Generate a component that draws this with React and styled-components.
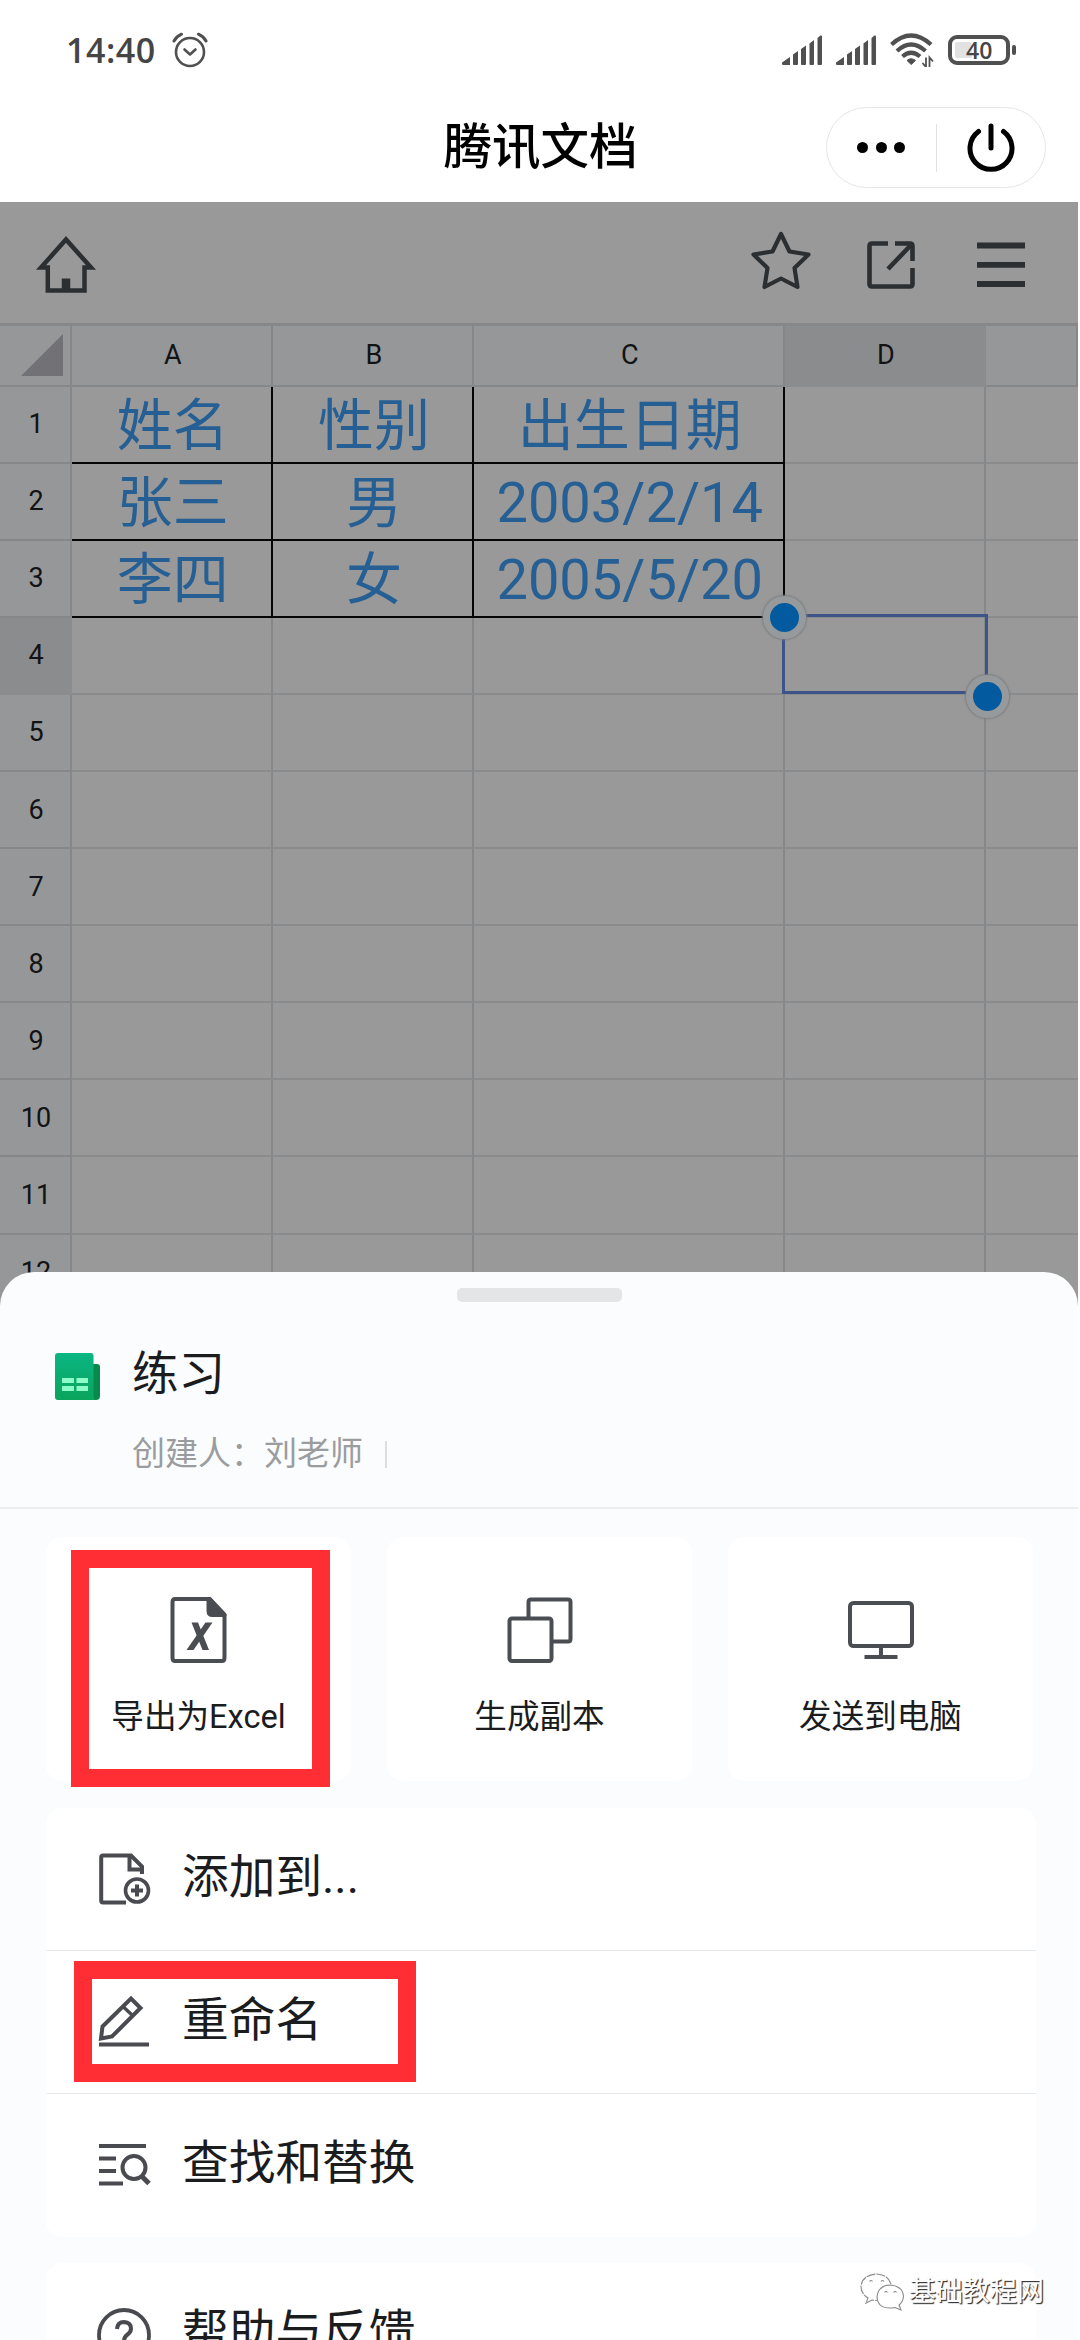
import React from 'react';
import styled, { createGlobalStyle } from 'styled-components';

const columns = ['A', 'B', 'C', 'D', ''];

const records = [
    ['姓名', '性别', '出生日期'],
    ['张三', '男', '2003/2/14'],
    ['李四', '女', '2005/5/20'],
];

const rowNumbers = [1, 2, 3, 4, 5, 6, 7, 8, 9, 10, 11, 12];

const App = () => {
    return (
        <Page>
            <GlobalStyle />
            <StatusBar />
            <NavBar />
            <Dimmed>
                <Toolbar />
                <SheetGrid />
            </Dimmed>
            <ActionSheet />
            <Watermark>
                <WechatIcon />
                <span>基础教程网</span>
            </Watermark>
        </Page>
    )
}

const StatusBar = () => (
    <Status>
        <StatusGroup>
            <Clock>14:40</Clock>
            <AlarmIcon />
        </StatusGroup>
        <StatusGroup>
            <SignalIcon />
            <SignalIcon />
            <WifiIcon />
            <Battery>
                <BatteryBody>
                    <BatteryLevel />
                    <BatteryText>40</BatteryText>
                </BatteryBody>
                <BatteryTip />
            </Battery>
        </StatusGroup>
    </Status>
)

const NavBar = () => (
    <Nav>
        <NavTitle>腾讯文档</NavTitle>
        <Capsule>
            <CapsuleButton>
                <Dot />
                <Dot />
                <Dot />
            </CapsuleButton>
            <CapsuleLine />
            <CapsuleButton>
                <PowerIcon />
            </CapsuleButton>
        </Capsule>
    </Nav>
)

const Toolbar = () => (
    <Tools>
        <HomeIcon />
        <ToolGroup>
            <StarIcon />
            <ShareIcon />
            <MenuIcon />
        </ToolGroup>
    </Tools>
)

const SheetGrid = () => (
    <Grid>
        <Corner>
            <svg width="42" height="42" viewBox="0 0 42 42">
                <path d="M42 0V42H0Z" fill="#727276" />
            </svg>
        </Corner>
        {columns.map((name) => (
            <ColumnHead key={name} $active={name === 'D'}>{name}</ColumnHead>
        ))}
        {rowNumbers.map((number, row) => (
            <React.Fragment key={number}>
                <RowHead $active={number === 4}>{number}</RowHead>
                {columns.map((name, col) => (
                    <Cell key={name} $bordered={row < 3 && col < 3}>
                        {records[row] && records[row][col]}
                        {name === 'D' && number === 4 && (
                            <Selection>
                                <Handle $start />
                                <Handle />
                            </Selection>
                        )}
                    </Cell>
                ))}
            </React.Fragment>
        ))}
    </Grid>
)

const ActionSheet = () => (
    <Panel>
        <Grabber />
        <FileInfo>
            <FileIcon />
            <FileText>
                <FileName>练习</FileName>
                <Creator>
                    创建人：刘老师
                    <CreatorLine />
                </Creator>
            </FileText>
        </FileInfo>
        <Tiles>
            <Tile>
                <ExcelIcon />
                导出为Excel
                <TileMark />
            </Tile>
            <Tile>
                <CopyIcon />
                生成副本
            </Tile>
            <Tile>
                <MonitorIcon />
                发送到电脑
            </Tile>
        </Tiles>
        <Card>
            <Row>
                <AddFileIcon />
                添加到...
            </Row>
            <Row>
                <PencilIcon />
                重命名
                <RowMark />
            </Row>
            <Row>
                <FindIcon />
                查找和替换
            </Row>
        </Card>
        <Card>
            <Row>
                <HelpIcon />
                帮助与反馈
            </Row>
        </Card>
    </Panel>
)

/* status bar icons */

const AlarmIcon = () => (
    <svg width="36" height="36" viewBox="0 0 36 36" fill="none" stroke="#505050" strokeWidth="2.6" strokeLinecap="round" strokeLinejoin="round">
        <circle cx="18" cy="20" r="14" />
        <path d="M12.500 17.500L18 22.500L23.500 17.500" />
        <path d="M2 9Q4.500 4.500 9.500 2.200M34 9Q31.500 4.500 26.500 2.200" strokeWidth="3" />
    </svg>
)

const SignalIcon = () => (
    <svg width="40" height="30" viewBox="0 0 40 30" fill="#505050">
        <path d="M0 27.500L8 22V30H1Q0 30 0 28.500Z" />
        <path d="M11 19.500L16 16V29Q16 30 15 30H12Q11 30 11 29Z" />
        <path d="M19 14L24 10.500V29Q24 30 23 30H20Q19 30 19 29Z" />
        <path d="M27.500 8.500L32 5V29Q32 30 31 30H28.500Q27.500 30 27.500 29Z" />
        <path d="M35.500 3L38.500 0.500Q40 0 40 1.500V29Q40 30 39 30H36.500Q35.500 30 35.500 29Z" />
    </svg>
)

const WifiIcon = () => (
    <svg width="44" height="34" viewBox="0 0 44 34" fill="none" stroke="#505050">
        <path d="M1.500 11.500Q21 -6.500 41 11.500" strokeWidth="4.200" />
        <path d="M7 18Q21 5 35.500 18" strokeWidth="4.200" />
        <path d="M12.500 23.500Q21 16 30 23.500" strokeWidth="4.200" />
        <path d="M17 27.500Q21 24 25.500 27.500L21.200 31.500Z" fill="#505050" strokeWidth="1" />
        <path d="M36 24.500V34L32.500 30M39.500 34V24.500L43 28.500" strokeWidth="1.800" />
    </svg>
)

const PowerIcon = () => (
    <svg width="48" height="50" viewBox="0 0 48 50" fill="none" stroke="#000" strokeWidth="5" strokeLinecap="round">
        <path d="M24 3V25" />
        <path d="M11.500 8.500A21 21 0 1 0 36.500 8.500" />
    </svg>
)

/* toolbar icons */

const HomeIcon = () => (
    <svg width="60" height="58" viewBox="0 0 60 58" overflow="visible" fill="none" stroke="#2b2f32" strokeWidth="4.500">
        <path d="M11.800 54.500V31.500H5L30 3.500L55 31.500H48.500V54.500Z" />
        <path d="M30 42.500V54" strokeWidth="8.500" />
    </svg>
)

const StarIcon = () => (
    <svg width="60" height="60" viewBox="0 0 60 60" fill="none" stroke="#2b2f32" strokeWidth="4.200" strokeLinejoin="round">
        <path d="M30 4L38.500 21.500L57.500 24.500L43.500 38L46.500 57L30 48.500L13.500 57L16.500 38L2.500 24.500L21.500 21.500Z" />
    </svg>
)

const ShareIcon = () => (
    <svg width="48" height="48" viewBox="0 0 48 48" fill="none" stroke="#2b2f32" strokeWidth="4.600" strokeLinejoin="round">
        <path d="M21 2.500H5Q2.500 2.500 2.500 5V43Q2.500 45.500 5 45.500H43Q45.500 45.500 45.500 43V27" />
        <path d="M28 2.500H43Q45.500 2.500 45.500 5V20" />
        <path d="M44 4L21 28" />
    </svg>
)

const MenuIcon = () => (
    <svg width="48" height="46" viewBox="0 0 48 46" stroke="#2b2f32" strokeWidth="5.800">
        <path d="M0 3.500H48M0 22.800H48M0 42H48" />
    </svg>
)

/* action sheet icons */

const FileIcon = () => (
    <svg width="45" height="47" viewBox="0 0 45 47">
        <defs>
            <linearGradient id="file" x1="0" y1="0" x2="0" y2="1">
                <stop offset="0" stopColor="#0ab683" />
                <stop offset="1" stopColor="#0aa45c" />
            </linearGradient>
        </defs>
        <path d="M30 11H42Q45 11 45 14V43Q45 47 41 47H30Z" fill="#088a4c" />
        <path d="M3 0H36Q38.500 0 38.500 3V43Q38.500 46 41 47H3Q0 47 0 44V3Q0 0 3 0Z" fill="url(#file)" />
        <path d="M7 25H19V30H7ZM21.500 25H33V30H21.500ZM7 33H19V38H7ZM21.500 33H33V38H21.500Z" fill="#8dfcc8" />
    </svg>
)

const ExcelIcon = () => (
    <TileSvg viewBox="0 0 66 66">
        <path d="M44 2H9Q6.500 2 6.500 5.500V60.500Q6.500 64 9 64H56Q58.500 64 58.500 60.500V17.500Z" />
        <path d="M42.500 2V14Q42.500 18 46.500 18H58.500Z" fill="#4a4d52" />
        <path d="M25.500 25.500H32L43 53H36.500Z" fill="#4a4d52" stroke="none" />
        <path d="M39.500 25.500H46.500L27.500 53H20.500Z" fill="#4a4d52" stroke="none" />
    </TileSvg>
)

const CopyIcon = () => (
    <TileSvg viewBox="0 0 66 66">
        <path d="M21.500 21V5Q21.500 2.500 24 2.500H61Q63.500 2.500 63.500 5V42Q63.500 44.500 61 44.500H45" />
        <rect x="2.500" y="21.500" width="42" height="42.500" rx="2.500" />
    </TileSvg>
)

const MonitorIcon = () => (
    <TileSvg viewBox="0 0 66 66">
        <rect x="2" y="6" width="62" height="43" rx="3.500" />
        <path d="M33 49V60M16.500 60H49.500" />
    </TileSvg>
)

const AddFileIcon = () => (
    <RowSvg viewBox="0 0 52 52">
        <path d="M27 49.500H4Q2.200 49.500 2.200 47.500V4.500Q2.200 2.500 4 2.500H32L43 13.500V21" />
        <path d="M30.500 3V16.500H44" />
        <circle cx="38" cy="37.500" r="11.500" strokeWidth="3.600" />
        <path d="M38 31.500V43.500M32 37.500H44" />
    </RowSvg>
)

const PencilIcon = () => (
    <RowSvg viewBox="0 0 52 52">
        <path d="M2 42.500L3.500 30.500L32 2.500L41.500 12L13 40.500Z" />
        <path d="M24.500 11L33 19" strokeWidth="3.400" />
        <path d="M0 48.500H50" />
    </RowSvg>
)

const FindIcon = () => (
    <RowSvg viewBox="0 0 52 52">
        <path d="M0 7H47M0 19.500H17M0 32H17M0 44.500H24" />
        <circle cx="35" cy="28.500" r="11.500" />
        <path d="M42.500 37L50 44.500" strokeWidth="5" />
    </RowSvg>
)

const HelpIcon = () => (
    <RowSvg viewBox="0 0 52 52">
        <circle cx="25" cy="27" r="25" strokeWidth="3.800" />
        <path d="M18 21Q18.500 14 25 14Q32 14.500 32 20.500Q32 24 28.500 26.500Q25 29 25 33" />
    </RowSvg>
)

const WechatIcon = () => (
    <svg width="45" height="38" viewBox="0 0 45 38" fill="none" stroke="#8a8a8a" strokeWidth="1.100">
        <path d="M31 11Q28 1.500 16.500 1Q2 2 1 13.500Q1 21 8 25L6 30L12 27L17 27.500" strokeDasharray="9 1" />
        <path d="M30 12Q43 13 43.500 23.500Q43 29 39 32L41 37L35 34.500Q18 37.500 17 24Q18 12.500 30 12Z" fill="#fff" />
        <path d="M9.500 8.500Q11 6.500 12.500 8.500M21 8.500Q22.500 6.500 24 8.500M24.500 19.500Q26 17.500 27.500 19.500M33.500 19.500Q35 17.500 36.500 19.500" />
    </svg>
)

const GlobalStyle = createGlobalStyle`
body {
    margin: 0;
    background: #fff;
    font-family: Roboto, "Noto Sans CJK SC", sans-serif;
}

svg {
    display: block;
    flex-shrink: 0;
}
`

const Page = styled.div`
position: relative;
width: 1078px;
height: 2340px;
overflow: hidden;
background: #fff;
`

const Status = styled.div`
display: flex;
justify-content: space-between;
align-items: center;
box-sizing: border-box;
height: 100px;
padding: 0 62px 1px 66px;
`

const StatusGroup = styled.div`
display: flex;
align-items: center;
gap: 14px;
`

const Clock = styled.span`
margin-right: 2px;
font-family: "Open Sans", "Noto Sans", sans-serif;
font-size: 34px;
font-weight: 600;
line-height: 46px;
letter-spacing: 0.5px;
color: #454545;
`

const Battery = styled.div`
display: flex;
align-items: center;
gap: 2px;
`

const BatteryBody = styled.div`
display: flex;
align-items: center;
box-sizing: border-box;
width: 62px;
height: 30px;
padding: 3px;
border: 4px solid #505050;
border-radius: 9px;
`

const BatteryLevel = styled.div`
width: 17px;
height: 16px;
border-radius: 2px;
background: #e2e2e2;
`

const BatteryText = styled.span`
margin-left: -6px;
font-family: "Open Sans", "Noto Sans", sans-serif;
font-size: 23px;
font-weight: 600;
line-height: 22px;
color: #454545;
`

const BatteryTip = styled.div`
width: 4px;
height: 10px;
border-radius: 2px;
background: #505050;
`

const Nav = styled.div`
position: relative;
display: flex;
justify-content: center;
align-items: flex-start;
height: 102px;
`

const NavTitle = styled.div`
padding: 8px 0 0 3px;
font-family: "Noto Sans CJK SC", sans-serif;
font-size: 48.5px;
font-weight: 500;
line-height: 70px;
color: #000;
`

const Capsule = styled.div`
position: absolute;
top: 7px;
right: 32px;
display: flex;
align-items: center;
box-sizing: border-box;
width: 220px;
height: 81px;
border: 1.5px solid #e6e6e6;
border-radius: 41px;
`

const CapsuleButton = styled.div`
display: flex;
flex: 1;
justify-content: center;
align-items: center;
gap: 7.5px;
`

const CapsuleLine = styled.div`
width: 1px;
height: 48px;
background: #e2e2e2;
`

const Dot = styled.div`
width: 11px;
height: 11px;
border-radius: 50%;
background: #000;
`

const Dimmed = styled.div`
height: 1120px;
overflow: hidden;
background: #999;
`

const Tools = styled.div`
display: flex;
justify-content: space-between;
align-items: center;
box-sizing: border-box;
height: 124px;
padding: 4px 53px 0 36px;
border-bottom: 3px solid #87888a;
`

const ToolGroup = styled.div`
display: flex;
align-items: center;
gap: 59px;

svg:first-child {
    margin: -9px -3px 0 0;
}

svg:last-child {
    margin-left: 3px;
}
`

const Grid = styled.div`
display: grid;
grid-template-columns: 72px 201.4px 201px 310.6px 201.5px 91.5px;
grid-template-rows: 60.5px repeat(12, 77.1px);
`

const HeadCell = styled.div`
display: flex;
justify-content: center;
align-items: center;
box-sizing: border-box;
padding-left: 2px;
border-right: 2px solid ${(props) => (props.$active ? '#8b8c8e' : '#85878a')};
border-bottom: 2px solid ${(props) => (props.$active ? '#8b8c8e' : '#868789')};
background: ${(props) => (props.$active ? '#8b8c8e' : '#959799')};
font-size: 27px;
color: #111314;
`

const Corner = styled(HeadCell)`
justify-content: flex-end;
padding-right: 7px;
`

const ColumnHead = styled(HeadCell)``

const RowHead = styled(HeadCell)``

const Cell = styled.div`
position: relative;
display: flex;
justify-content: center;
align-items: center;
box-sizing: border-box;
padding: 3px 0 0 2px;
border-right: 2px solid ${(props) => (props.$bordered ? '#050505' : '#868789')};
border-bottom: 2px solid ${(props) => (props.$bordered ? '#050505' : '#8a8b8c')};
font-size: 56px;
line-height: 70px;
white-space: nowrap;
color: #255f94;

&:nth-child(6n) {
    border-right: none;
}
`

const Selection = styled.div`
position: absolute;
z-index: 1;
top: -4px;
left: -3px;
right: -4px;
bottom: -1px;
border: 3px solid #3d5489;
`

const Handle = styled.div`
position: absolute;
${(props) => (props.$start ? 'top: -21px; left: -22px;' : 'right: -24px; bottom: -27px;')}
box-sizing: border-box;
width: 43px;
height: 43px;
border: 7.5px solid #979a9c;
border-radius: 50%;
background: #045a9e;
box-shadow: 0 0 2px 1px #7c7d7f;
`

const Panel = styled.div`
position: relative;
display: flow-root;
height: 1068px;
margin-top: -50px;
border-radius: 34px 34px 0 0;
background: #fafcfe;
color: #1b1c1e;
`

const Grabber = styled.div`
width: 165px;
height: 14px;
margin: 16px auto 0;
border-radius: 5px;
background: #e4e5e7;
`

const FileInfo = styled.div`
display: flex;
align-items: flex-start;
gap: 32px;
box-sizing: border-box;
height: 207px;
padding: 37px 0 0 55px;
border-bottom: 2px solid #ebecee;

svg {
    margin-top: 14px;
}
`

const FileText = styled.div`
display: flex;
flex-direction: column;
gap: 21px;
`

const FileName = styled.div`
font-size: 46.5px;
font-weight: 400;
line-height: 70px;
`

const Creator = styled.div`
display: flex;
align-items: center;
gap: 22px;
font-size: 33px;
line-height: 48px;
color: #9b9c9e;
`

const CreatorLine = styled.div`
width: 2px;
height: 27px;
background: #dcdddf;
`

const Tiles = styled.div`
display: flex;
gap: 36px;
padding: 28px 45px 0 46px;
`

const Tile = styled.div`
position: relative;
display: flex;
flex: 1;
flex-direction: column;
align-items: center;
gap: 30px;
box-sizing: border-box;
height: 244px;
padding-top: 60px;
border-radius: 16px;
background: #fff;
font-size: 32.6px;
line-height: 48px;
`

const TileSvg = styled.svg`
width: 66px;
height: 66px;
fill: none;
stroke: #4a4d52;
stroke-width: 4;
stroke-linejoin: round;
`

const Card = styled.div`
margin: 27px 42px 0 46px;
border-radius: 16px;
background: #fff;

& + & {
    margin-top: 26px;
}
`

const Row = styled.div`
position: relative;
display: flex;
align-items: center;
gap: 31px;
box-sizing: border-box;
height: 143px;
padding: 0 0 5px 53px;
border-bottom: 1.5px solid #e9eaeb;
font-size: 46.7px;
line-height: 70px;

&:last-child {
    border-bottom-color: transparent;
}
`

const RowSvg = styled.svg`
width: 52px;
height: 52px;
margin-top: 5px;
overflow: visible;
fill: none;
stroke: #4a4b50;
stroke-width: 4;
`

/* red frames that point at the two actions of the tutorial */
const Mark = styled.div`
position: absolute;
box-sizing: border-box;
border: 18px solid #ff2e34;
`

const TileMark = styled(Mark)`
top: 13px;
left: 25px;
width: 259px;
height: 237px;
`

const RowMark = styled(Mark)`
top: 10px;
left: 28px;
width: 342px;
height: 121px;
`

const Watermark = styled.div`
position: absolute;
right: 34px;
bottom: 28px;
display: flex;
align-items: center;
gap: 4px;
font-size: 27px;
line-height: 40px;
color: #fff;
text-shadow: 1px 1px 1px #333, 1px 1px 1px #777;
`

export default App;
